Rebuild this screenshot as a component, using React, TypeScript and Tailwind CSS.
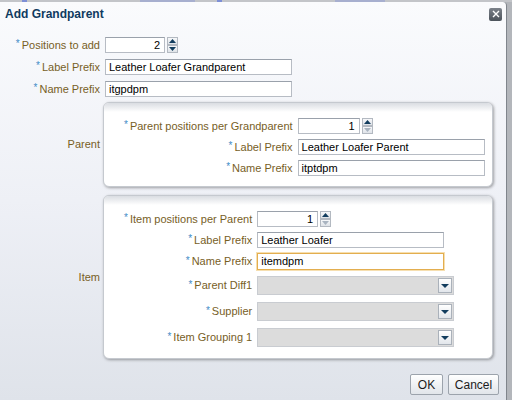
import { ReactNode } from "react";

const font = { fontFamily: '"Liberation Sans", Arial, sans-serif' };

function Label({ children }: { children: ReactNode }) {
  return (
    <div className="flex h-[16px] items-center justify-end whitespace-nowrap text-[11px] leading-none text-[#77601f]">
      <span className="relative top-[-1px] mr-[2px] text-[10px] leading-none text-[#3f8cc7]">*</span>
      <span>{children}</span>
    </div>
  );
}

function TextInput({ value, focused }: { value: string; focused?: boolean }) {
  return (
    <div
      className={
        focused
          ? "flex h-[17px] w-[187px] items-center border border-[#e3ae4f] bg-white px-[3px] text-[11px] leading-none text-black shadow-[0_0_0_1px_#f6dfb0]"
          : "flex h-[16px] w-[187px] items-center border border-[#b7bcc4] border-t-[#9aa1ab] bg-white px-[3px] text-[11px] leading-none text-black"
      }
    >
      {value}
    </div>
  );
}

function Arrow({ up, disabled }: { up?: boolean; disabled?: boolean }) {
  return (
    <div className="flex h-[8px] w-[11px] items-center justify-center border border-[#b3b9c1] bg-gradient-to-b from-[#f7f8fa] to-[#dfe3e8]">
      <svg width="7" height="4" viewBox="0 0 7 4">
        <path
          d={up ? "M0 4 L3.5 0 L7 4 Z" : "M0 0 L3.5 4 L7 0 Z"}
          fill={disabled ? "#a9b4c0" : "#123d5e"}
        />
      </svg>
    </div>
  );
}

function Spinner({ value, width, downDisabled }: { value: string; width: string; downDisabled?: boolean }) {
  return (
    <div className="flex items-center gap-[2px]">
      <div
        className={`flex h-[16px] ${width} items-center justify-end border border-[#b7bcc4] border-t-[#9aa1ab] bg-white px-[4px] text-[11px] leading-none text-black`}
      >
        {value}
      </div>
      <div className="flex flex-col">
        <Arrow up />
        <Arrow disabled={downDisabled} />
      </div>
    </div>
  );
}

function Select() {
  return (
    <div className="my-[1px] flex h-[19px] w-[197px] items-center border border-[#c9ccd1] bg-[#dcdcdc] pr-[1px]">
      <div className="flex-1" />
      <div className="flex h-[15px] w-[14px] items-center justify-center border border-[#aab1ba] bg-gradient-to-b from-white to-[#e2e6eb]">
        <svg width="8" height="6" viewBox="0 0 8 6">
          <path d="M0 1 L8 1 L4 5 Z" fill="#123d5e" />
        </svg>
      </div>
    </div>
  );
}

function Panel({ title, children }: { title: string; children: ReactNode }) {
  return (
    <div className="flex items-center gap-[3px]">
      <div className="w-[100px] text-right text-[11px] leading-none text-[#77601f]">{title}</div>
      <div className="w-[390px] overflow-hidden rounded-[6px] border border-[#c5c9cf] bg-white shadow-[1px_1px_3px_rgba(0,0,0,0.35)]">
        <div className="h-[9px] bg-gradient-to-b from-[#dadde2] to-white" />
        <div className="pb-[10px] pl-[20px] pt-[6px]">{children}</div>
      </div>
    </div>
  );
}

export default function App() {
  return (
    <div className="h-[400px] w-[512px] overflow-hidden bg-[#b3b6bb]" style={font}>
      <div className="flex h-[2px] bg-[#c3c5c9]">
        <div className="ml-[22px] w-[5px] bg-[#7d8fd6]" />
        <div className="ml-[113px] w-[55px] bg-[#a7afcf]" />
        <div className="ml-[22px] w-[5px] bg-[#7d8fd6]" />
        <div className="ml-[113px] w-[50px] bg-[#a7afcf]" />
      </div>
      <div className="flex h-[398px] w-[507px] flex-col rounded-tr-[4px] border-r border-[#80858c] bg-gradient-to-b from-[#fafbfd] via-[#eef0f6] to-[#dfe3ea]">
        <div className="flex h-[24px] items-center justify-between pl-[5px] pr-[4px]">
          <span className="text-[12px] font-bold leading-none text-[#0f3a60]">Add Grandparent</span>
          <div className="flex h-[13px] w-[13px] items-center justify-center rounded-[2px] bg-gradient-to-b from-[#7c828a] to-[#4c535b]">
            <svg width="8" height="8" viewBox="0 0 8 8">
              <path d="M1 1 L7 7 M7 1 L1 7" stroke="white" strokeWidth="1.4" />
            </svg>
          </div>
        </div>

        <div className="mt-[11px] grid grid-cols-[100px_auto] items-center justify-start gap-x-[5px] gap-y-[6px]">
          <Label>Positions to add</Label>
          <Spinner value="2" width="w-[60px]" />
          <Label>Label Prefix</Label>
          <TextInput value="Leather Loafer Grandparent" />
          <Label>Name Prefix</Label>
          <TextInput value="itgpdpm" />
        </div>

        <div className="mt-[5px] flex flex-col gap-[8px]">
          <Panel title="Parent">
            <div className="grid grid-cols-[auto_auto] items-center justify-start gap-x-[5px] gap-y-[5px]">
              <Label>Parent positions per Grandparent</Label>
              <Spinner value="1" width="w-[62px]" downDisabled />
              <Label>Label Prefix</Label>
              <TextInput value="Leather Loafer Parent" />
              <Label>Name Prefix</Label>
              <TextInput value="itptdpm" />
            </div>
          </Panel>

          <Panel title="Item">
            <div className="grid grid-cols-[auto_auto] items-center justify-start gap-x-[5px] gap-y-[5px]">
              <Label>Item positions per Parent</Label>
              <Spinner value="1" width="w-[61px]" downDisabled />
              <Label>Label Prefix</Label>
              <TextInput value="Leather Loafer" />
              <Label>Name Prefix</Label>
              <TextInput value="itemdpm" focused />
              <Label>Parent Diff1</Label>
              <Select />
              <Label>Supplier</Label>
              <Select />
              <Label>Item Grouping 1</Label>
              <Select />
            </div>
          </Panel>
        </div>

        <div className="mt-[15px] flex justify-end gap-[5px] pr-[7px]">
          <button className="h-[21px] w-[33px] rounded-[2px] border border-[#9ca3ac] bg-gradient-to-b from-white to-[#e1e5ea] text-[12px] leading-none text-[#1c1c1c]">
            OK
          </button>
          <button className="h-[21px] w-[51px] rounded-[2px] border border-[#9ca3ac] bg-gradient-to-b from-white to-[#e1e5ea] text-[12px] leading-none text-[#1c1c1c]">
            Cancel
          </button>
        </div>
      </div>
    </div>
  );
}
